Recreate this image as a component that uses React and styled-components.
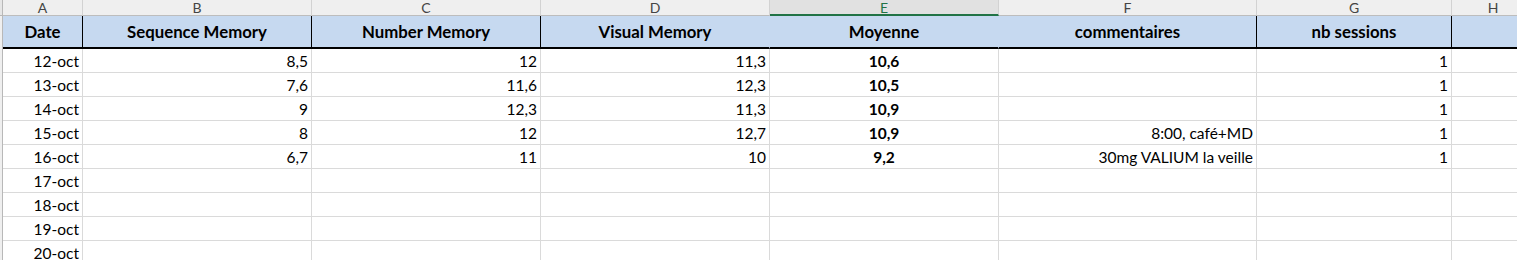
import React from "react";
import styled, { createGlobalStyle } from "styled-components";

const GlobalStyle = createGlobalStyle`
  html, body {
    margin: 0;
    padding: 0;
    overflow: hidden;
    background: #ffffff;
  }
  body {
    font-family: Lato, "Open Sans", "Liberation Sans", sans-serif;
  }
`;

const COLUMNS = "3px 80px 229px 229px 229px 229px 258px 195px 83px";

const Sheet = styled.div`
  display: grid;
  grid-template-columns: ${COLUMNS};
  grid-template-rows: 16px 33px repeat(9, 24px);
  width: max-content;
  color: #000;
`;

const Corner = styled.div`
  background: #e6e6e6;
  border-right: 1px solid #b8b8b8;
  border-bottom: 1px solid #b8b8b8;
`;

const ColHead = styled.div`
  display: flex;
  align-items: center;
  justify-content: center;
  box-sizing: border-box;
  background: ${(p) => (p.selected ? "#e1e1e1" : "#efefef")};
  border-right: 1px solid #d2d2d2;
  border-bottom: ${(p) => (p.selected ? "2px solid #217346" : "1px solid #bdbdbd")};
  color: ${(p) => (p.selected ? "#217346" : "#444")};
  font-size: 14px;
  line-height: 1;
  padding-top: ${(p) => (p.selected ? "1px" : "0")};
  overflow: hidden;
`;

const Gutter = styled.div`
  background: #efefef;
  border-right: 1px solid #b8b8b8;
`;

const HeaderCell = styled.div`
  display: flex;
  align-items: center;
  justify-content: center;
  box-sizing: border-box;
  background: #c6d9f0;
  border-bottom: 2px solid #000;
  border-right: 1px solid ${(p) => (p.edge ? "#000" : "#c6d9f0")};
  font-size: 16.8px;
  font-weight: 700;
  white-space: nowrap;
  padding-bottom: 1px;
`;

const Cell = styled.div`
  display: flex;
  align-items: center;
  justify-content: ${(p) => (p.center ? "center" : "flex-end")};
  box-sizing: border-box;
  border-right: 1px solid #dadada;
  border-bottom: 1px solid #dadada;
  padding: 0 3px 0 3px;
  font-size: 15.5px;
  font-weight: ${(p) => (p.bold ? 700 : 400)};
  white-space: nowrap;
  overflow: hidden;
`;

const letters = ["A", "B", "C", "D", "E", "F", "G", "H"];

const headers = [
  { label: "Date", edge: true },
  { label: "Sequence Memory", edge: true },
  { label: "Number Memory", edge: true },
  { label: "Visual Memory", edge: false },
  { label: "Moyenne", edge: false },
  { label: "commentaires", edge: true },
  { label: "nb sessions", edge: true },
  { label: "", edge: false },
];

const rows = [
  ["12-oct", "8,5", "12", "11,3", "10,6", "", "1"],
  ["13-oct", "7,6", "11,6", "12,3", "10,5", "", "1"],
  ["14-oct", "9", "12,3", "11,3", "10,9", "", "1"],
  ["15-oct", "8", "12", "12,7", "10,9", "8:00, café+MD", "1"],
  ["16-oct", "6,7", "11", "10", "9,2", "30mg VALIUM la veille", "1"],
  ["17-oct", "", "", "", "", "", ""],
  ["18-oct", "", "", "", "", "", ""],
  ["19-oct", "", "", "", "", "", ""],
  ["20-oct", "", "", "", "", "", ""],
];

const App = () => {
  return (
    <>
      <GlobalStyle />
      <Sheet>
        <Corner />
        {letters.map((l) => (
          <ColHead key={l} selected={l === "E"}>
            {l}
          </ColHead>
        ))}

        <Gutter />
        {headers.map((h, i) => (
          <HeaderCell key={i} edge={h.edge}>
            {h.label}
          </HeaderCell>
        ))}

        {rows.map((row, r) => (
          <React.Fragment key={r}>
            <Gutter />
            {row.map((v, c) => (
              <Cell key={c} center={c === 4} bold={c === 4}>
                {v}
              </Cell>
            ))}
            <Cell />
          </React.Fragment>
        ))}
      </Sheet>
    </>
  );
};

export default App;
